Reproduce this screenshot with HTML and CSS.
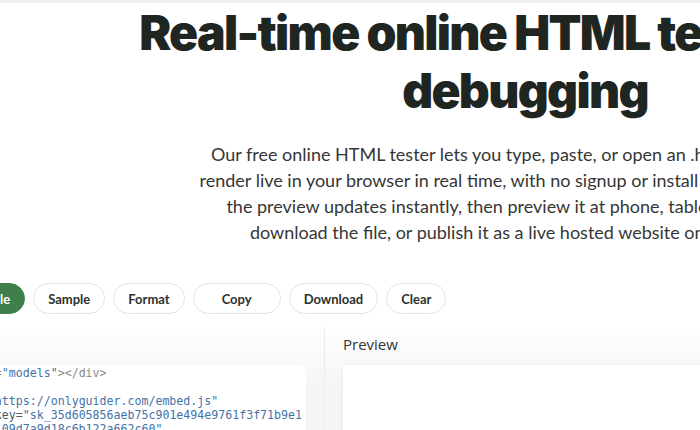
FILE: index.html
```html
<!DOCTYPE html>
<html lang="en">
<head>
<meta charset="utf-8">
<title>Real-time online HTML tester</title>
<link rel="stylesheet" href="styles.css">
</head>
<body>
<div class="topstrip"></div>
<div class="page">
  <section class="hero">
    <h1 class="hero-title">Real-time online HTML testing and debugging</h1>
    <p class="hero-text">Our free online HTML tester lets you type, paste, or open an .html file and see it<br>render live in your browser in real time, with no signup or install needed. Edit it and<br>the preview updates instantly, then preview it at phone, tablet, and desktop,<br>download the file, or publish it as a live hosted website online for free.</p>
  </section>
  <div class="tool-area">
    <div class="toolbar">
      <button class="btn btn-primary">Open file</button>
      <button class="btn">Sample</button>
      <button class="btn">Format</button>
      <button class="btn btn-copy">Copy</button>
      <button class="btn">Download</button>
      <button class="btn">Clear</button>
    </div>
    <div class="workspace">
      <div class="pane pane-editor">
        <div class="pane-head">HTML</div>
        <div class="code-box"><pre class="code"><span class="tag">&lt;div id=</span><span class="str">"models"</span><span class="tag">&gt;&lt;/div&gt;</span>
<span class="tag">&lt;script</span>
  <span class="attr">src=</span><span class="str">"https://onlyguider.com/embed.js"</span>
  <span class="attr">data-key=</span><span class="str">"sk_35d605856aeb75c901e494e9761f3f71b9e1</span>
<span class="str">        09d7a9d18c6b122a662c60"</span>
</pre></div>
      </div>
      <div class="divider"></div>
      <div class="pane pane-preview">
        <div class="pane-head">Preview</div>
        <div class="preview-box"></div>
      </div>
    </div>
  </div>
</div>
</body>
</html>
```
FILE: styles.css
```css
html, body {
  margin: 0;
  padding: 0;
  background: #ffffff;
  overflow: hidden;
  height: 430px;
}
body {
  font-family: Inter, "Noto Sans", sans-serif;
  color: #333;
}
.topstrip {
  height: 3px;
  background: #f1f1f1;
}
.page {
  width: 1450px;
  margin-left: -200px;
}
.hero {
  text-align: center;
}
.hero-title {
  margin: 1px auto 0;
  max-width: 900px;
  font-family: Inter, sans-serif;
  font-weight: 900;
  font-size: 48px;
  line-height: 57.6px;
  letter-spacing: -0.035em;
  color: #1f2622;
}
.hero-text {
  margin: 22px auto 0;
  font-family: Lato, sans-serif;
  font-size: 18px;
  line-height: 26px;
  color: #363636;
}
.tool-area {
  margin-left: 110px;
}
.toolbar {
  display: flex;
  gap: 8px;
  margin-top: 38px;
  padding-left: 32px;
}
.btn {
  height: 31px;
  padding: 0 14px;
  border: 1px solid #e3e3e3;
  border-radius: 999px;
  background: #fff;
  font-family: Lato, sans-serif;
  font-weight: 700;
  font-size: 13px;
  color: #2b322f;
}
.btn-primary {
  background: #3e7f4b;
  border-color: #3e7f4b;
  color: #fff;
}
.btn-copy {
  min-width: 88px;
}
.workspace {
  display: grid;
  grid-template-columns: 414px 1px 1fr;
  margin-top: 13px;
  height: 110px;
}
.pane {
  padding: 0 18px;
  background: linear-gradient(#fefefe, #f5f5f5 60px);
}
.divider {
  background: #ebebeb;
}
.pane-head {
  box-sizing: border-box;
  height: 38px;
  padding-bottom: 5px;
  display: flex;
  align-items: center;
  font-family: "Open Sans", sans-serif;
  font-size: 15px;
  color: #333;
}
.code-box {
  background: #fff;
  border-radius: 8px;
  padding: 1px 0 0 18px;
  height: 100px;
}
.code {
  margin: 0;
  font-family: "DejaVu Sans Mono", monospace;
  font-size: 11.6px;
  line-height: 14px;
  color: #555;
  white-space: pre;
}
.tag { color: #8a8a8a; }
.attr { color: #4d5b63; }
.str { color: #4472a8; }
.preview-box {
  background: #fff;
  height: 100px;
  box-shadow: 0 0 6px rgba(0,0,0,0.05);
}
```
